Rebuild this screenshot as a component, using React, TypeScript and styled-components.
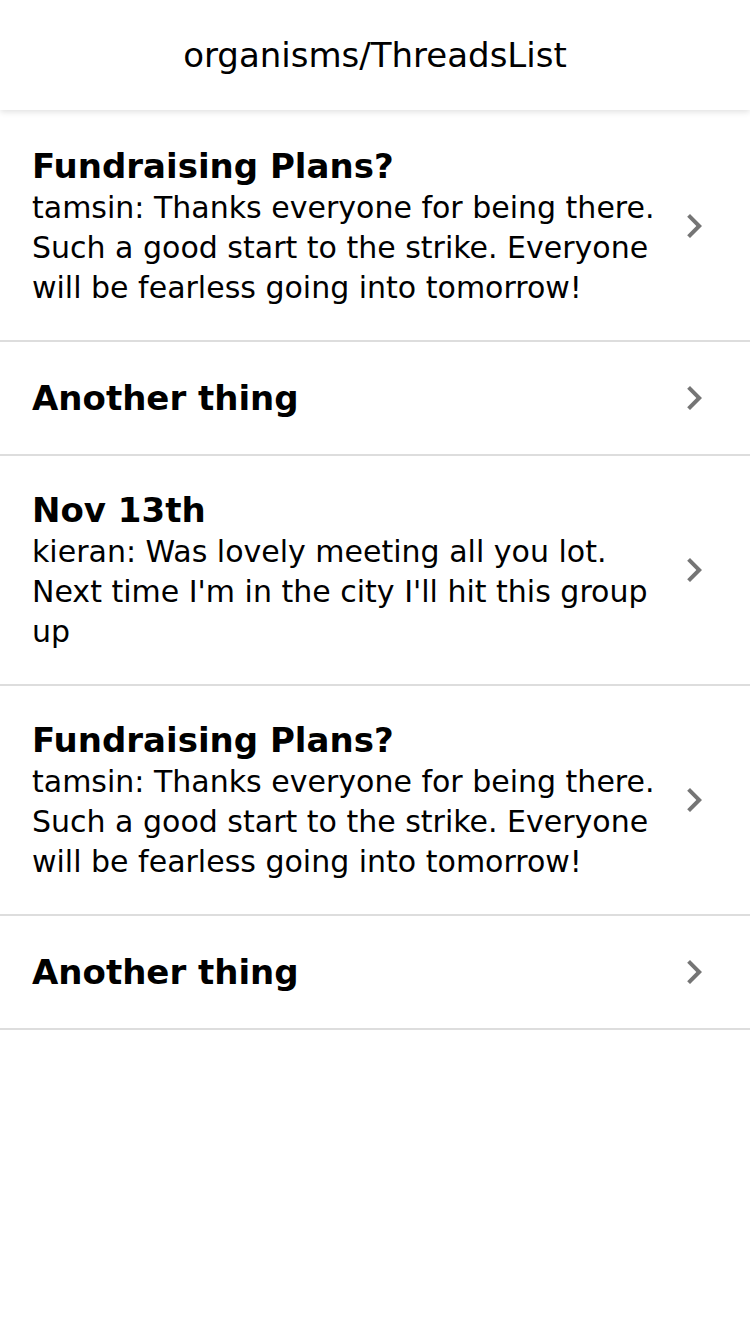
import React from 'react';
import styled, { createGlobalStyle } from 'styled-components';

const GlobalStyle = createGlobalStyle`
  html, body {
    margin: 0;
    padding: 0;
    background: #ffffff;
    font-family: "DejaVu Sans", sans-serif;
  }
`;

const Page = styled.div`
  min-height: 1334px;
  background: #ffffff;
`;

const Header = styled.header`
  height: 110px;
  display: flex;
  align-items: center;
  justify-content: center;
  background: #ffffff;
  box-shadow: 0 2px 6px rgba(0, 0, 0, 0.12);
  position: relative;
  z-index: 1;
`;

const HeaderTitle = styled.h1`
  margin: 0;
  font-size: 34px;
  font-weight: 400;
  color: #000000;
`;

const List = styled.ul`
  list-style: none;
  margin: 0;
  padding: 2px 0 0;
`;

const Row = styled.li`
  display: flex;
  align-items: center;
  gap: 12px;
  padding: 32px;
  border-bottom: 2px solid #dddddd;
`;

const Body = styled.div`
  flex: 1;
  min-width: 0;
`;

const Title = styled.div`
  font-size: 34px;
  line-height: 44px;
  font-weight: 700;
  color: #000000;
`;

const Preview = styled.div`
  font-size: 30px;
  line-height: 40px;
  color: #000000;
`;

const Chevron = styled.svg`
  width: 48px;
  height: 48px;
  flex-shrink: 0;
  fill: #757575;
`;

interface Thread {
  title: string;
  preview?: string;
}

const threads: Thread[] = [
  {
    title: 'Fundraising Plans?',
    preview: 'tamsin: Thanks everyone for being there. Such a good start to the strike. Everyone will be fearless going into tomorrow!'
  },
  { title: 'Another thing' },
  {
    title: 'Nov 13th',
    preview: "kieran: Was lovely meeting all you lot. Next time I'm in the city I'll hit this group up"
  },
  {
    title: 'Fundraising Plans?',
    preview: 'tamsin: Thanks everyone for being there. Such a good start to the strike. Everyone will be fearless going into tomorrow!'
  },
  { title: 'Another thing' }
];

export default function App() {
  return (
    <Page>
      <GlobalStyle />
      <Header>
        <HeaderTitle>organisms/ThreadsList</HeaderTitle>
      </Header>
      <List>
        {threads.map((thread, idx) => (
          <Row key={idx}>
            <Body>
              <Title>{thread.title}</Title>
              {thread.preview && <Preview>{thread.preview}</Preview>}
            </Body>
            <Chevron viewBox="0 0 24 24">
              <path d="M10 6L8.59 7.41 13.17 12l-4.58 4.59L10 18l6-6z" />
            </Chevron>
          </Row>
        ))}
      </List>
    </Page>
  );
}
